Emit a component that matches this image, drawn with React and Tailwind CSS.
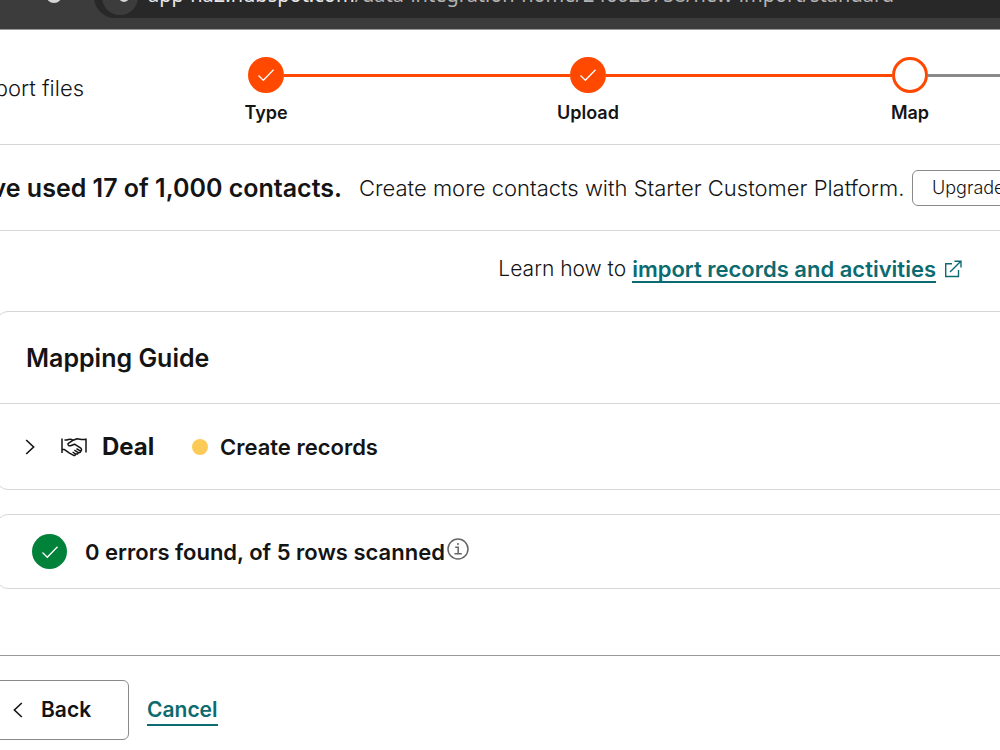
import React from 'react';

const CheckIcon = ({ className }) => (
  <svg viewBox="0 0 18 18" className={className} fill="none" stroke="currentColor" strokeWidth="1.3" aria-hidden="true">
    <path d="M1.5 9.5 L6.3 14.3 L16.5 3.7" />
  </svg>
);

const ChevronIcon = ({ className }) => (
  <svg viewBox="0 0 10 18" className={className} fill="none" stroke="currentColor" strokeWidth="1.6" aria-hidden="true">
    <path d="M1.2 2 L8.6 9 L1.2 16" />
  </svg>
);

const ExternalLinkIcon = () => (
  <svg viewBox="0 0 18 18" className="w-[18px] h-[18px]" fill="none" stroke="currentColor" strokeWidth="1.4" aria-hidden="true">
    <path d="M8 3.7 H1.7 V16.5 H14.5 V10 M6 12 L16.8 1.2 M10.5 1.2 H17 V7.5" />
  </svg>
);

const HandshakeIcon = () => (
  <svg viewBox="0 0 26 20" className="w-[26px] h-5 shrink-0" fill="none" stroke="currentColor" strokeWidth="1.5" strokeLinejoin="round" aria-hidden="true">
    <path d="M1 1.5 V16 M25 1.5 V15.5" />
    <path d="M1 12.6 H3.5 L8.5 16.2 L12.6 18.4 Q14.8 18.6 14.3 16.8 L11.6 15" />
    <path d="M3.5 3 H6 Q9 1.2 12.2 3.2 M25 2.6 H20.5 L16 1.8 L12.2 3.2 L7 6.6 Q6.8 9.2 9.5 8.8 L13.5 7.2 L19.8 11.2 Q21.4 13 19.6 14.2 L15.5 11.6" />
    <path d="M14.3 16.8 Q17.2 17.8 17.2 15.6 L13.4 13.2 M17.2 15.6 Q19.6 16 19.6 14.2" />
  </svg>
);

const InfoIcon = () => (
  <svg viewBox="0 0 22 22" className="w-[22px] h-[22px]" fill="none" stroke="currentColor" strokeWidth="1.5" aria-hidden="true">
    <circle cx="11" cy="11" r="10" />
    <path d="M8.2 9.3 H11.2 V15.8 M7.5 15.8 H14.8" />
    <circle cx="11" cy="6" r="1" fill="currentColor" stroke="none" />
  </svg>
);

const steps = [
  { label: 'Type', done: true },
  { label: 'Upload', done: true },
  { label: 'Map', done: false },
];

const BrowserBar = () => (
  <header className="h-[30px] flex items-end overflow-hidden bg-[#3c3c3c] border-b border-[#999] pb-[11px]">
    <div className="w-[94px] shrink-0 flex justify-center h-[42px] items-center pl-[14px] pb-1">
      <span className="w-4 h-4 rounded-full border-[3px] border-[#d6d6d6]" />
    </div>
    <div className="flex-1 h-[42px] flex items-center bg-[#282828] rounded-l-full pl-2 whitespace-nowrap">
      <span className="w-9 h-9 rounded-full bg-[#3c3c3c] flex justify-center items-center shrink-0 pl-2">
        <span className="w-[10px] h-[10px] rounded-full bg-[#d6d6d6]" />
      </span>
      <p className="pl-[10px] pb-1 text-xl leading-6 text-[#b4b4b4] font-['Noto_Sans',sans-serif]">
        <span className="text-[#e8e8e8]">app-na2.hubspot.com</span>/data-integration-home/246023758/new-import/standard
      </p>
    </div>
  </header>
);

const Stepper = () => (
  <ol className="flex w-[966px] shrink-0">
    {steps.map((step) => (
      <li key={step.label} className="w-[322px] flex flex-col items-center">
        <div className="w-full flex items-center">
          <span className={step.label === 'Type' ? 'flex-1' : 'flex-1 h-[3px] bg-[#ff4800]'} />
          <span
            className={`w-9 h-9 rounded-full border-[3px] border-[#ff4800] flex items-center justify-center text-white ${
              step.done ? 'bg-[#ff4800]' : 'bg-white'
            }`}
          >
            {step.done && <CheckIcon className="w-[18px] h-[18px]" />}
          </span>
          <span className={step.done ? 'flex-1 h-[3px] bg-[#ff4800]' : 'flex-1 h-[3px] bg-[#8a8a8a]'} />
        </div>
        <span className="mt-2 text-lg leading-6 font-semibold">{step.label}</span>
      </li>
    ))}
  </ol>
);

export default function App() {
  return (
    <div className="overflow-hidden bg-white text-[#141414] font-[Inter,sans-serif]">
      <BrowserBar />

      <div className="h-[115px] flex items-start border-b border-[#d6d6d6] pt-[27px]">
        <h1 className="w-[105px] shrink-0 h-[62px] flex items-center justify-end pr-[21px] text-[22px] leading-7 font-light whitespace-nowrap">
          Import files
        </h1>
        <Stepper />
      </div>

      <section className="h-[86px] flex items-center border-b border-[#d6d6d6] whitespace-nowrap">
        <div className="w-[342px] shrink-0 flex justify-end">
          <strong className="text-[25px] leading-8 font-semibold">You've used 17 of 1,000 contacts.</strong>
        </div>
        <p className="w-[552px] shrink-0 pl-[17px] text-[22px] leading-7 font-light">
          Create more contacts with Starter Customer Platform.
        </p>
        <button className="ml-[18px] h-9 shrink-0 rounded-md border border-[#8a8a8a] px-[19px] text-lg leading-6 font-light">
          Upgrade
        </button>
      </section>

      <main>
        <p className="h-20 flex items-center justify-end pr-[38px] pb-1 gap-[6px] text-[21px] leading-7 font-light whitespace-nowrap">
          <span>Learn how to</span>
          <a href="#import-help" className="flex items-center gap-2 text-[22px] leading-6 font-semibold text-[#0b6b70]">
            <span className="mt-[2px] border-b-2 border-[#0b6b70]">import records and activities</span>
            <ExternalLinkIcon />
          </a>
        </p>

        <section className="-ml-1 -mr-4 rounded-xl border border-[#d6d6d6]">
          <h2 className="h-[91px] flex items-center pl-[29px] text-[25px] leading-8 font-semibold">Mapping Guide</h2>
          <div className="h-[86px] flex items-center border-t border-[#d6d6d6] pl-7">
            <button aria-label="Expand Deal" className="w-9">
              <ChevronIcon className="w-[10px] h-[18px]" />
            </button>
            <HandshakeIcon />
            <h3 className="pl-[15px] w-[105px] text-2xl leading-8 font-bold">Deal</h3>
            <span className="w-4 h-4 rounded-full bg-[#fccb57]" />
            <span className="pl-3 text-[22px] leading-7 font-semibold">Create records</span>
          </div>
        </section>

        <section className="-ml-1 -mr-4 mt-6 h-[75px] flex items-center rounded-xl border border-[#d6d6d6] pl-[35px]">
          <span className="w-[35px] h-[35px] rounded-full bg-[#00823a] text-white flex items-center justify-center">
            <CheckIcon className="w-[18px] h-[18px]" />
          </span>
          <p className="pl-[18px] text-[22px] leading-7 font-semibold">0 errors found, of 5 rows scanned</p>
          <button aria-label="Scan details" className="ml-[2px] mb-[6px] text-[#666]">
            <InfoIcon />
          </button>
        </section>
      </main>

      <footer className="mt-[66px] border-t border-[#999] pt-6 pb-[10px] flex items-center">
        <button className="-ml-2 w-[137px] h-[60px] flex items-center rounded-md border border-[#8a8a8a] pl-5 text-[21px] leading-7 font-semibold">
          <ChevronIcon className="w-[10px] h-[18px] rotate-180" />
          <span className="pl-[18px]">Back</span>
        </button>
        <button className="ml-[18px] mt-[2px] text-[21px] leading-7 font-semibold text-[#0b6b70] border-b-2 border-[#0b6b70]">
          Cancel
        </button>
      </footer>
    </div>
  );
}
